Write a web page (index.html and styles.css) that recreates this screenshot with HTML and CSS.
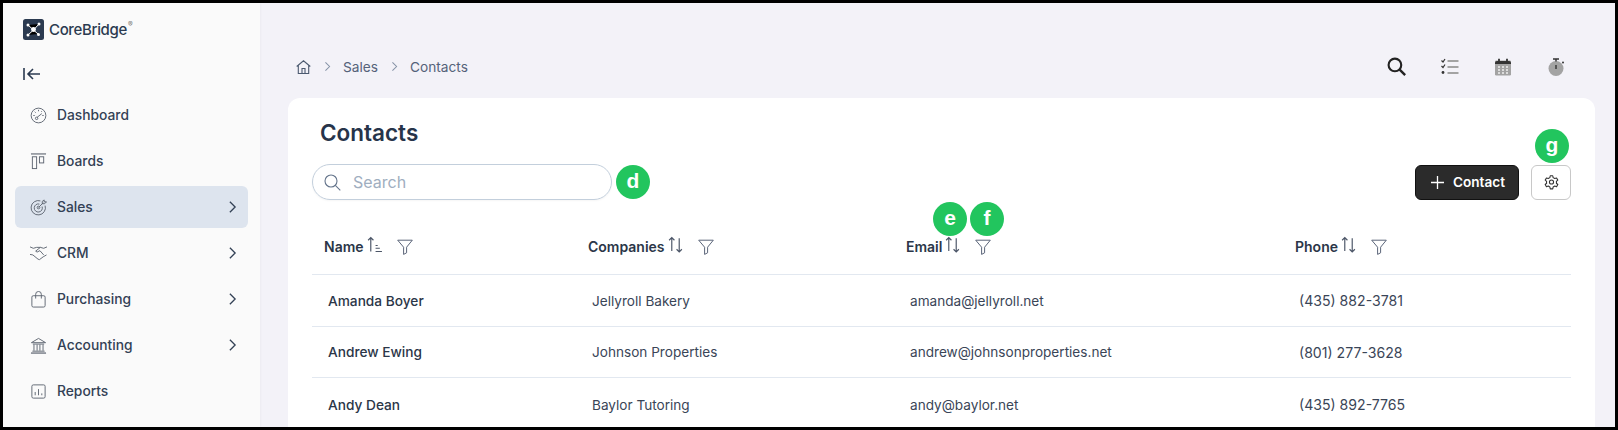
FILE: index.html
```html
<!DOCTYPE html>
<html>
<head lang="en">
    <meta charset="UTF-8">
    <title>Contacts</title>
    <link rel="stylesheet" href="styles.css">
</head>
<body>
<svg class="defs" width="0" height="0">
    <symbol id="chev" viewBox="0 0 10 16"><path d="M2 2l6 6-6 6" fill="none" stroke="currentColor" stroke-width="1.5"/></symbol>
    <symbol id="filter" viewBox="0 0 16 16"><path d="M.7 1.2h14.6L9.6 8.2v5.6l-3 1.6V8.2z" fill="none" stroke="#5b6579" stroke-width="1" stroke-linejoin="round"/></symbol>
    <symbol id="updown" viewBox="0 0 14 16"><path d="M3.5 14V1.500M1 4l2.500-2.500L6 4M10.500 2v13M8 12.500l2.500 2.500 2.500-2.500" fill="none" stroke="#4b5567" stroke-width="1.100"/></symbol>
</svg>
<div class="frame">
    <aside class="sidebar">
        <div class="logo">
            <svg class="logo-mark" viewBox="0 0 21 21">
                <rect width="21" height="21" rx="2.5" fill="#2b3a50"/>
                <path d="M5 6l5.500 5L16 5M5 16l5.500-5 4.500 4" stroke="#fff" stroke-width="1"/>
                <circle cx="10.500" cy="10.500" r="2.400" fill="#fff"/>
                <circle cx="5" cy="6" r="1.500" fill="#fff"/><circle cx="16" cy="5" r="1.500" fill="#fff"/>
                <circle cx="5" cy="16" r="1.500" fill="#fff"/><circle cx="15.500" cy="15.500" r="1.500" fill="#fff"/>
            </svg>
            <span class="logo-text">CoreBridge</span><span class="logo-reg">®</span>
        </div>
        <svg class="collapse" width="17" height="12" viewBox="0 0 17 12"><path d="M1 0v12M17 6H5M10 1L5 6l5 5" fill="none" stroke="#2b3a50" stroke-width="1.6"/></svg>
        <nav class="nav">
            <a class="nav-item">
                <svg class="nav-icon" viewBox="0 0 18 18"><g fill="none" stroke="#5f6672" stroke-width="1"><circle cx="9" cy="9" r="7.800"/><path d="M7.500 11L12.500 7"/><circle cx="7" cy="12" r="1.300"/><path d="M3.500 9h1.500M5 5l1 1M9 3v1.500M13 9h1.500M12.500 4.500l-.8.8"/></g></svg>
                <span>Dashboard</span>
            </a>
            <a class="nav-item">
                <svg class="nav-icon" viewBox="0 0 18 18"><g fill="none" stroke="#5f6672" stroke-width="1"><path d="M1 1h16" stroke-width="1.200"/><rect x="2.500" y="4" width="4.500" height="12.500"/><rect x="10" y="4" width="4.500" height="6.500"/></g></svg>
                <span>Boards</span>
            </a>
            <a class="nav-item active">
                <svg class="nav-icon" viewBox="0 0 18 18"><g fill="none" stroke="#5f6672" stroke-width="1"><path d="M11 2a7.600 7.600 0 1 0 5 5"/><path d="M10 5.400A4.300 4.300 0 1 0 12.800 8"/><circle cx="9" cy="9" r="1.400"/><path d="M9 9l5-5M13 2.500v2.500h2.500L17.500 3H15V1z"/></g></svg>
                <span>Sales</span>
                <svg class="chev"><use href="#chev"/></svg>
            </a>
            <a class="nav-item">
                <svg class="nav-icon" viewBox="0 0 18 18"><g fill="none" stroke="#5f6672" stroke-width="1"><path d="M0 2l3.500 1.500L7 2.500h4l3.500 1L18 2M0 10l3 .5 5.500 4.500 1.500.5 4-3 3.500-2"/><path d="M11 2.500L6 6.500l1.500 1L10.500 6l4 4.500"/></g></svg>
                <span>CRM</span>
                <svg class="chev"><use href="#chev"/></svg>
            </a>
            <a class="nav-item">
                <svg class="nav-icon" viewBox="0 0 18 18"><g fill="none" stroke="#5f6672" stroke-width="1"><rect x="2" y="5" width="14" height="12" rx="1.500"/><path d="M6 8V3.500a3 3 0 0 1 6 0V8"/></g></svg>
                <span>Purchasing</span>
                <svg class="chev"><use href="#chev"/></svg>
            </a>
            <a class="nav-item">
                <svg class="nav-icon" viewBox="0 0 18 18"><g fill="none" stroke="#5f6672" stroke-width="1"><path d="M1.500 6L9 1.500 16.500 6zM3 7.500h12M4.200 8v6.500M7.500 8v6.500M10.500 8v6.500M13.800 8v6.500M2.500 15h13"/><path d="M1 17h16" stroke-width="1.300"/></g></svg>
                <span>Accounting</span>
                <svg class="chev"><use href="#chev"/></svg>
            </a>
            <a class="nav-item">
                <svg class="nav-icon" viewBox="0 0 18 18"><g fill="none" stroke="#5f6672" stroke-width="1"><rect x="2" y="2" width="14" height="14" rx="1.500"/><path d="M5.500 9.500v3.500M9 6.500V13M12.500 11v2"/></g></svg>
                <span>Reports</span>
            </a>
        </nav>
    </aside>

    <main class="main">
        <div class="topbar">
            <div class="crumbs">
                <svg class="home" viewBox="0 0 15 14"><path d="M.7 6.500L7.500.8l6.800 5.700M2.300 5.500v8h10.400v-8M6 13.500V8.500h3v5" fill="none" stroke="#4c5a70" stroke-width="1.100"/></svg>
                <svg class="crumb-chev"><use href="#chev"/></svg>
                <span>Sales</span>
                <svg class="crumb-chev"><use href="#chev"/></svg>
                <span>Contacts</span>
            </div>
            <div class="tools">
                <svg class="tool tool-search" viewBox="0 0 18 18"><circle cx="7.500" cy="7.500" r="6" fill="none" stroke="#222" stroke-width="2"/><path d="M12 12l5.200 5.200" stroke="#222" stroke-width="2.200"/></svg>
                <svg class="tool" viewBox="0 0 18 18"><path d="M.5 2.500l1.500 1.500L4 1M.5 8l1.500 1.500L4 6.500" fill="none" stroke="#333" stroke-width="1.200"/><circle cx="2" cy="14.500" r="1.400" fill="#333"/><path d="M6.500 3h11M6.500 9h11M6.500 15h11" stroke="#a3a3a3" stroke-width="1.800"/></svg>
                <svg class="tool" viewBox="0 0 18 18"><rect x="1" y="2.500" width="16" height="15" rx="1.200" fill="#a3a3a3"/><path d="M1 5a2 2 0 0 1 2-2h12a2 2 0 0 1 2 2v1H1z" fill="#333"/><path d="M5 .8v3.500M13 .8v3.500" stroke="#333" stroke-width="1.800"/><path d="M4 9h2M8 9h2M12 9h2M4 12h2M8 12h2M12 12h2M4 15h2M8 15h2M12 15h2" stroke="#f0f0f0" stroke-width="1.500"/></svg>
                <svg class="tool" viewBox="0 0 18 18"><circle cx="9" cy="10.500" r="7.500" fill="#a3a3a3"/><path d="M6 1h6M9 1v2.500" stroke="#333" stroke-width="1.500"/><path d="M9 7v4" stroke="#333" stroke-width="1.400"/><circle cx="16" cy="4.500" r="1" fill="#333"/></svg>
            </div>
        </div>

        <section class="card">
            <h1 class="title">Contacts</h1>
            <div class="controls">
                <div class="search">
                    <svg class="search-icon" viewBox="0 0 17 17"><circle cx="7" cy="7" r="6" fill="none" stroke="#64748b" stroke-width="1.100"/><path d="M11.300 11.300l5 5" stroke="#64748b" stroke-width="1.100"/></svg>
                    <span>Search</span>
                </div>
                <span class="marker marker-d">d</span>
                <button class="add-btn">
                    <svg width="13" height="13" viewBox="0 0 13 13"><path d="M6.500 0v13M0 6.500h13" stroke="#fff" stroke-width="1.300"/></svg>
                    <span>Contact</span>
                </button>
                <button class="gear-btn">
                    <span class="marker marker-g">g</span>
                    <svg width="15" height="16" viewBox="0 0 24 24"><g fill="none" stroke="#333" stroke-width="1.700" stroke-linejoin="round"><path d="M10 2h4l.6 3 2.600 1.500 2.900-1 2 3.500-2.300 2a7 7 0 0 1 0 3l2.300 2-2 3.500-2.900-1-2.600 1.500-.6 3h-4l-.6-3-2.600-1.500-2.900 1-2-3.500 2.300-2a7 7 0 0 1 0-3l-2.300-2 2-3.500 2.900 1L9.400 5z"/><circle cx="12" cy="12" r="3.300"/></g></svg>
                </button>
            </div>

            <div class="row head">
                <div class="th">
                    <span>Name</span>
                    <svg class="sort" viewBox="0 0 14 16"><path d="M3.500 14.500V1.500M1 4l2.500-2.500L6 4" fill="none" stroke="#4b5567" stroke-width="1.100"/><path d="M8 9h2M8 11.500h4M8 14.500h6" stroke="#4b5567" stroke-width="1"/></svg>
                    <svg class="filter"><use href="#filter"/></svg>
                </div>
                <div class="th">
                    <span>Companies</span>
                    <svg class="sort"><use href="#updown"/></svg>
                    <svg class="filter"><use href="#filter"/></svg>
                </div>
                <div class="th">
                    <span>Email</span>
                    <svg class="sort"><use href="#updown"/></svg>
                    <svg class="filter"><use href="#filter"/></svg>
                    <span class="marker marker-e">e</span>
                    <span class="marker marker-f">f</span>
                </div>
                <div class="th">
                    <span>Phone</span>
                    <svg class="sort"><use href="#updown"/></svg>
                    <svg class="filter"><use href="#filter"/></svg>
                </div>
            </div>
            <div class="row">
                <div class="td name">Amanda Boyer</div>
                <div class="td">Jellyroll Bakery</div>
                <div class="td">amanda@jellyroll.net</div>
                <div class="td phone">(435) 882-3781</div>
            </div>
            <div class="row">
                <div class="td name">Andrew Ewing</div>
                <div class="td">Johnson Properties</div>
                <div class="td">andrew@johnsonproperties.net</div>
                <div class="td phone">(801) 277-3628</div>
            </div>
            <div class="row last">
                <div class="td name">Andy Dean</div>
                <div class="td">Baylor Tutoring</div>
                <div class="td">andy@baylor.net</div>
                <div class="td phone">(435) 892-7765</div>
            </div>
        </section>
    </main>
</div>
</body>
</html>
```

FILE: styles.css
```css
* {
    margin: 0;
    padding: 0;
    box-sizing: border-box;
}
:root {
    --ink: #2b3648;
    --line: #e2e8f0;
    --green: #22c55e;
}
html, body {
    height: 430px;
    overflow: hidden;
}
body {
    font-family: Inter, "Liberation Sans", sans-serif;
    font-size: 14px;
    color: var(--ink);
}
.defs {
    position: absolute;
}
.frame {
    display: flex;
    width: 1618px;
    height: 430px;
    border: 3px solid #000;
    overflow: hidden;
    background: #f3f2f8;
}

/* sidebar */
.sidebar {
    flex: 0 0 257px;
    background: #fafafa;
    box-shadow: 1px 0 2px rgba(0, 0, 0, 0.03);
    padding: 16px 12px 0;
}
.logo {
    display: flex;
    align-items: center;
    height: 21px;
    padding-left: 8px;
}
.logo-mark {
    width: 21px;
    height: 21px;
    margin-right: 5px;
}
.logo-text {
    font-size: 15px;
    font-weight: 500;
    letter-spacing: -0.35px;
    color: #2b3a50;
}
.logo-reg {
    font-size: 7px;
    margin: -10px 0 0 1px;
    color: #777;
}
.collapse {
    display: block;
    margin: 28px 0 0 8px;
}
.nav {
    margin-top: 12px;
}
.nav-item {
    display: flex;
    align-items: center;
    width: 233px;
    height: 46px;
    padding: 0 11px 0 15px;
    font-size: 13.8px;
    font-weight: 500;
    color: #334155;
}
.nav-item.active {
    background: #dde4ee;
    border-radius: 6px;
    height: 42px;
    margin: 2px 0;
}
.nav-icon {
    width: 17px;
    height: 17px;
    margin-right: 10px;
}
.chev {
    width: 9px;
    height: 14px;
    margin-left: auto;
    color: #334155;
}

/* main */
.main {
    flex: 1;
    min-width: 0;
    padding: 0 20px 0 28px;
}
.topbar {
    display: flex;
    justify-content: space-between;
    align-items: center;
    height: 95px;
    padding: 32px 30px 0 8px;
}
.crumbs {
    display: flex;
    align-items: center;
    font-size: 13.7px;
    color: #55627a;
}
.home {
    width: 15px;
    height: 14px;
}
.crumb-chev {
    width: 7px;
    height: 11px;
    margin: 0 12px 0 13px;
    color: #8592a6;
}
.tools {
    display: flex;
    align-items: center;
    gap: 35px;
}
.tool {
    width: 18px;
    height: 18px;
}
.tool-search {
    width: 19px;
    height: 19px;
}

/* card */
.card {
    background: #fff;
    border-radius: 12px 12px 0 0;
    height: 340px;
    padding: 20px 24px 0;
}
.title {
    font-size: 22.5px;
    font-weight: 600;
    line-height: 30px;
    margin-left: 8px;
    color: #27344a;
}
.controls {
    display: flex;
    align-items: center;
    position: relative;
    height: 36px;
    margin-top: 16px;
}
.search {
    display: flex;
    align-items: center;
    width: 300px;
    height: 36px;
    border: 1px solid #c3cfdc;
    border-radius: 18px;
    padding-left: 11px;
    font-size: 16px;
    color: #a0aec0;
    box-shadow: 0 1px 2px rgba(0, 0, 0, 0.04);
}
.search-icon {
    width: 17px;
    height: 17px;
    margin-right: 12px;
}
.add-btn {
    display: flex;
    align-items: center;
    gap: 9px;
    width: 104px;
    height: 35px;
    margin-left: auto;
    padding-left: 15px;
    background: #2b2b2b;
    border: 1px solid #111;
    border-radius: 6px;
    color: #fff;
    font: 600 13.6px Inter, "Liberation Sans", sans-serif;
}
.gear-btn {
    display: flex;
    align-items: center;
    justify-content: center;
    position: relative;
    width: 40px;
    height: 35px;
    margin-left: 12px;
    background: #fff;
    border: 1px solid #c8c8c8;
    border-radius: 6px;
}

/* table */
.row {
    display: grid;
    grid-template-columns: 264px 318px 389px 1fr;
    align-items: center;
    height: 51px;
    border-bottom: 1px solid var(--line);
}
.row.head {
    height: 75px;
    padding-top: 19px;
}
.row.head + .row {
    height: 52px;
}
.row.last {
    padding-top: 3px;
}
.th {
    display: flex;
    align-items: center;
    position: relative;
    padding-left: 12px;
    font-weight: 600;
    font-size: 14px;
}
.sort {
    width: 15px;
    height: 17px;
    margin: -4px 0 0 3px;
}
.filter {
    width: 16px;
    height: 16px;
    margin-left: 15px;
}
.td {
    padding-left: 16px;
    font-size: 13.6px;
    color: #3a4557;
}
.td.name {
    font-size: 13.7px;
    font-weight: 500;
    color: var(--ink);
}
.td.phone {
    font-size: 14.1px;
}

/* callout letters lying over the page */
.marker {
    position: absolute;
    width: 34px;
    height: 34px;
    border-radius: 50%;
    background: var(--green);
    color: #fff;
    font: 700 21px/32px "Liberation Sans", sans-serif;
    text-align: center;
}
.marker-d {
    left: 304px;
    top: 1px;
}
.marker-g {
    left: 3px;
    top: -37px;
}
.marker-e {
    left: 39px;
    top: -36px;
}
.marker-f {
    left: 76px;
    top: -36px;
}
```
